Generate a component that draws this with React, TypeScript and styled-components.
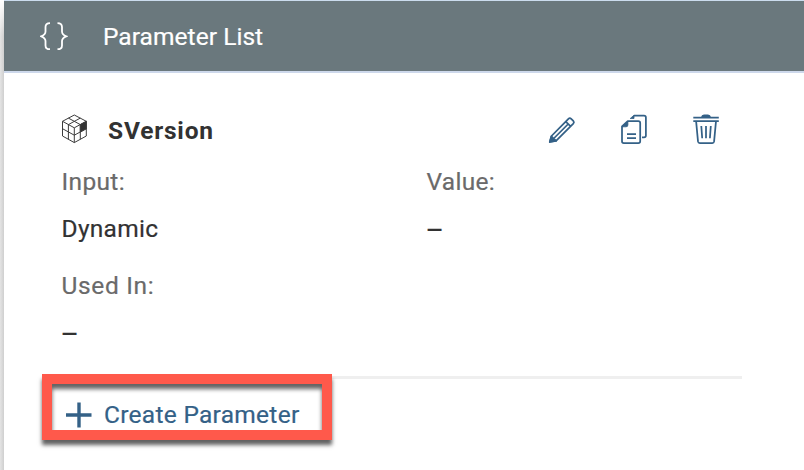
import React from "react";
import styled, { createGlobalStyle } from "styled-components";

const GlobalStyle = createGlobalStyle`
  *, *::before, *::after { box-sizing: border-box; }
  body { margin: 0; background: #fff; font-family: Roboto, sans-serif; }
`;

const Page = styled.div`
  display: flex;
  width: 804px;
  height: 470px;
  overflow: hidden;
  background: #fff;
`;

const Gutter = styled.div`
  flex: 0 0 4px;
  background: linear-gradient(to right, #e4e4e4, #cfcfcf);
  mask-image: linear-gradient(to bottom, transparent, #000 36px);
`;

const Panel = styled.main`
  flex: 1;
  display: flex;
  flex-direction: column;
`;

const Header = styled.header`
  display: flex;
  align-items: center;
  height: 73px;
  padding-left: 36px;
  border-top: 1px solid #cbdcee;
  border-bottom: 2px solid #cdd8eb;
  background: #6a787d;
  background-clip: padding-box;
  color: #fff;
`;

const Text = styled.span<{ $spacing?: number; $tone?: "label" | "value" | "link" }>`
  display: block;
  font-size: 24.5px;
  line-height: 32px;
  white-space: nowrap;
  letter-spacing: ${({ $spacing = 0 }) => $spacing}px;
  -webkit-text-stroke: 0.2px currentColor;
  color: ${({ $tone }) =>
    $tone === "label" ? "#6a6a6a" : $tone === "value" ? "#323232" : $tone === "link" ? "#346187" : "inherit"};
`;

const EmptyValue = styled(Text)`
  padding-top: 2px;
  margin: 0 0 -2px -1px;
  font-size: 28px;
`;

const Title = styled.h1`
  margin: 1px 0 0 35px;
  font-weight: 400;
`;

const Content = styled.section`
  display: flex;
  flex-direction: column;
  width: 700px;
  margin-left: 38px;
  padding: 39px 0 0 20px;
`;

const ItemHeader = styled.div`
  display: flex;
  align-items: center;
  height: 38px;
`;

const ItemName = styled.h2`
  flex: 1;
  margin: 0 0 0 19px;
  font-size: 24.5px;
  line-height: 32px;
  font-weight: 700;
  color: #323232;
  letter-spacing: 0.8px;
`;

const Actions = styled.div`
  display: flex;
  gap: 40px;
  margin-right: 20px;
`;

const IconButton = styled.button`
  width: 32px;
  height: 36px;
  padding: 0;
  border: 0;
  background: none;
  color: #346187;
  svg { display: block; }
`;

const Fields = styled.div`
  display: grid;
  grid-template-columns: 365px 1fr;
  row-gap: 25px;
  padding-top: 16px;
`;

const Field = styled.div`
  display: flex;
  flex-direction: column;
  gap: 15px;
  margin-left: -0.5px;
`;

const Divider = styled.hr`
  width: 700px;
  height: 3px;
  margin: 27px 0 0 -20px;
  border: 0;
  background: #efefef;
`;

const CreateButton = styled.button`
  position: relative;
  display: flex;
  align-items: center;
  align-self: flex-start;
  gap: 12px;
  width: 290px;
  height: 66px;
  margin: -5px 0 0 -20px;
  padding: 15px 0 0 14px;
  border: 10px solid #ff594b;
  background: #fff;
  box-shadow: 0 5px 4px rgba(0, 0, 0, 0.62), inset 0 5px 4px rgba(0, 0, 0, 0.62);
  font-family: inherit;
  color: #346187;
`;

const BracesIcon = () => (
  <svg width="28" height="30" viewBox="0 0 28 30" fill="none" stroke="currentColor" strokeWidth="1.8">
    <path d="M10 2.2C6.8 2.2 5.5 3.3 5.5 6v4.5c0 2.2-1.3 3.6-4.2 4.8 2.9 1.2 4.2 2.6 4.2 4.8v4.3c0 2.7 1.3 3.8 4.5 3.8M17.5 2.2c3.2 0 4.5 1.1 4.5 3.8v4.5c0 2.2 1.3 3.6 4.2 4.8-2.9 1.2-4.2 2.6-4.2 4.8v4.3c0 2.7-1.3 3.8-4.5 3.8" />
  </svg>
);

const CubeIcon = () => (
  <svg width="27" height="34" viewBox="0 0 27 34" fill="none" stroke="#3c3c3c" strokeWidth="1" strokeLinejoin="round">
    <path d="M12.3 1L24.3 7.3V22L12.3 28.6L.5 22V7.3ZM.5 7.3L12.3 13.8L24.3 7.3M12.3 13.8V28.6M6.4 4.1L18.3 10.6V25.3M18.3 4.1L6.4 10.6V25.3M.5 14.7L12.3 21.2L24.3 14.7" />
    <path d="M18.3 10.6L24.3 7.3V14.7L18.3 18Z" fill="#323232" />
  </svg>
);

const PencilIcon = () => (
  <svg width="32" height="36" viewBox="0 1 32 36" fill="none" stroke="currentColor" strokeWidth="1.75" strokeLinejoin="round">
    <path d="M5.5 24L22.4 6.8Q23.8 5.4 25.2 6.8L27.3 8.9Q28.6 10.3 27.3 11.7L10.3 28.7L3.8 30ZM19.8 9.6L24.9 14.6M8.2 26L22.2 12" />
    <path d="M5.4 24.3L10.2 28.8L3.8 30Z" fill="currentColor" />
  </svg>
);

const CopyIcon = () => (
  <svg width="32" height="36" viewBox="0 0 32 36" fill="none" stroke="currentColor" strokeWidth="1.75" strokeLinejoin="round">
    <path d="M4 13.5L9.7 8.1H20.3Q22.2 8.1 22.2 10V28.2Q22.2 30 20.3 30H5.8Q4 30 4 28.2Z M9 25H18M9 21H18M24 24.4H26Q27.9 24.4 27.9 22.5V4.4Q27.9 2.6 26 2.6H16" />
    <path d="M4 13.8L9.9 8.2V11.9Q9.9 13.8 8 13.8ZM12.2 5.5L16 2.2V5.5Z" fill="currentColor" strokeWidth=".8" />
  </svg>
);

const TrashIcon = () => (
  <svg width="32" height="36" viewBox="0 0 32 36" fill="none" stroke="currentColor" strokeWidth="1.75" strokeLinejoin="round">
    <path d="M3.3 4.5H28.8M3.3 8.2H28.8M6.1 8.2L8 28.4Q8.2 30 9.8 30H22.3Q23.9 30 24.1 28.4L26 8.2M11.3 13L12.2 25.3M16 13V25.3M20.8 13L19.9 25.3" />
    <path d="M12 4.2Q12.2 2.4 14 2.4H18Q19.8 2.4 20 4.2Z" fill="currentColor" />
  </svg>
);

const PlusIcon = () => (
  <svg width="26" height="26" viewBox="0 0 26 26" stroke="currentColor" strokeWidth="3.4">
    <path d="M0 13H25.5M13 .5V25.5" />
  </svg>
);

export default function App() {
  return (
    <>
      <GlobalStyle />
      <Page>
        <Gutter />
        <Panel>
          <Header>
            <BracesIcon />
            <Title><Text $spacing={0.05}>Parameter List</Text></Title>
          </Header>
          <Content>
            <ItemHeader>
              <CubeIcon />
              <ItemName>SVersion</ItemName>
              <Actions>
                <IconButton aria-label="Edit"><PencilIcon /></IconButton>
                <IconButton aria-label="Copy"><CopyIcon /></IconButton>
                <IconButton aria-label="Delete"><TrashIcon /></IconButton>
              </Actions>
            </ItemHeader>
            <Fields>
              <Field>
                <Text $tone="label" $spacing={0.35}>Input:</Text>
                <Text $tone="value" $spacing={0.3}>Dynamic</Text>
              </Field>
              <Field>
                <Text $tone="label" $spacing={0.3}>Value:</Text>
                <EmptyValue $tone="value">–</EmptyValue>
              </Field>
              <Field>
                <Text $tone="label" $spacing={0.65}>Used In:</Text>
                <EmptyValue $tone="value">–</EmptyValue>
              </Field>
            </Fields>
            <Divider />
            <CreateButton>
              <PlusIcon />
              <Text $tone="link" $spacing={0.28}>Create Parameter</Text>
            </CreateButton>
          </Content>
        </Panel>
      </Page>
    </>
  );
}
